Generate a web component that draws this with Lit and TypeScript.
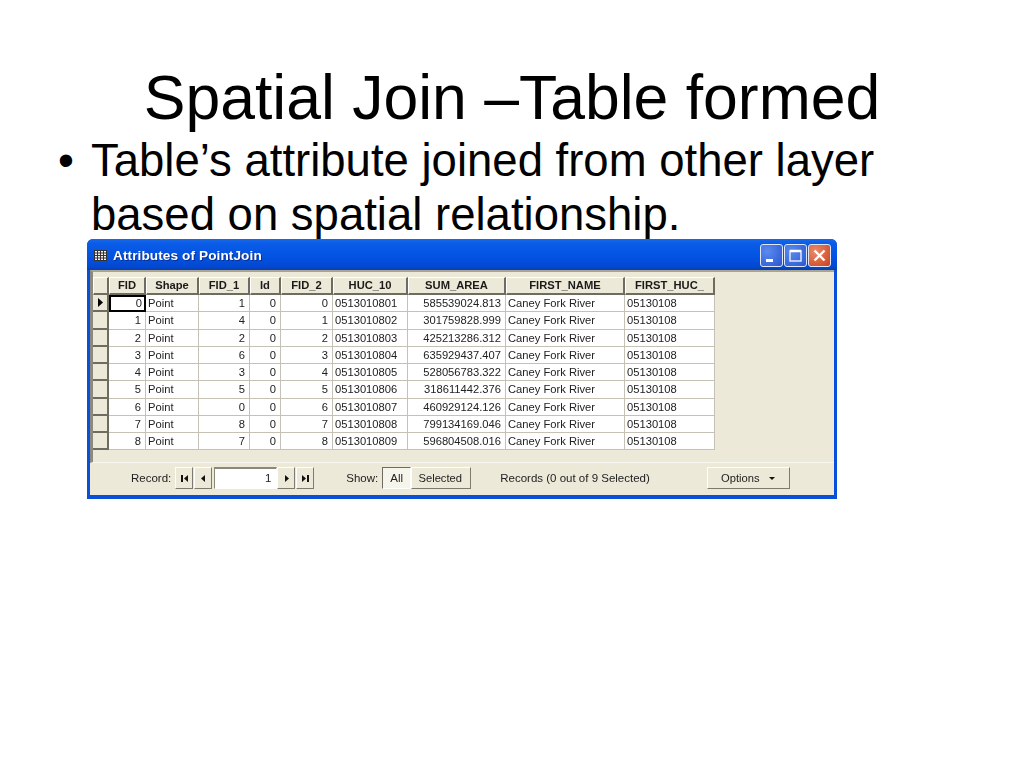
import { LitElement, html, css, svg } from "lit";
import { customElement } from "lit/decorators.js";

const COLS = [37, 53, 51, 31, 52, 75, 98, 119, 90];
const HEADS = ["FID", "Shape", "FID_1", "Id", "FID_2", "HUC_10", "SUM_AREA", "FIRST_NAME", "FIRST_HUC_"];
const ROWS: [number, number, number, number, string][] = [
  [0, 1, 0, 0, "585539024.813"],
  [1, 4, 0, 1, "301759828.999"],
  [2, 2, 0, 2, "425213286.312"],
  [3, 6, 0, 3, "635929437.407"],
  [4, 3, 0, 4, "528056783.322"],
  [5, 5, 0, 5, "318611442.376"],
  [6, 0, 0, 6, "460929124.126"],
  [7, 8, 0, 7, "799134169.046"],
  [8, 7, 0, 8, "596804508.016"],
];

const first = svg`<rect x="1" y="1" width="2" height="7"/><path d="M8 1v7L4 4.5z"/>`;
const prev = svg`<path d="M6 1v7L2 4.5z"/>`;
const next = svg`<path d="M3 1v7l4-3.5z"/>`;
const last = svg`<path d="M1 1v7l4-3.5z"/><rect x="6" y="1" width="2" height="7"/>`;

@customElement("app-root")
export class AppRoot extends LitElement {
  static styles = css`
    :host { display: block; width: 1024px; height: 768px; background: #fff; overflow: hidden;
      font-family: "Liberation Sans", Arial, sans-serif; color: #000; }
    .title { margin: 0; padding-top: 60px; height: 74px; font-size: 62.5px; line-height: 74px; font-weight: 400; text-align: center; }
    .bullet { display: flex; margin: 0; padding: 0 0 0 58px; font-size: 45.5px; line-height: 54px; height: 105px; }
    .dot { width: 33px; flex: none; }
    .win { margin-left: 87px; width: 750px; height: 260px; box-sizing: border-box; display: flex; flex-direction: column;
      background: #0a4fd8; border-radius: 6px 6px 0 0; padding: 0 3px 4px; filter: blur(.35px); }
    .bar { height: 31px; flex: none; display: flex; align-items: center; gap: 1px; box-sizing: border-box;
      color: #fff; font-weight: 700; font-size: 13.6px; letter-spacing: .1px;
      background: linear-gradient(#1a68e8 0, #0a5ce6 15%, #0453e4 55%, #0248d0 90%, #0a3fa8 100%);
      margin: 0 -3px; padding: 2px 6px 0 7px; border-radius: 6px 6px 0 0; }
    .bar svg.ico { margin-right: 5px; }
    .bar .name { flex: 1; text-shadow: 1px 1px 0 #0a2f90; }
    .wb { width: 23px; height: 23px; box-sizing: border-box; border: 1px solid #dfe8fb; border-radius: 3px; flex: none; display: block; }
    .wb svg { display: block; }
    .wb.blue { background: radial-gradient(circle at 30% 30%, #5b8aef, #2a56d0); }
    .wb.red { background: radial-gradient(circle at 30% 30%, #ec8a6a, #c9411c); }
    .body { flex: 1; background: #ece9d8; display: flex; flex-direction: column; min-height: 0; }
    .grid-wrap { height: 193px; flex: none; box-sizing: border-box; border-top: 2px solid #a8a596; border-left: 3px solid #8b8a80;
      border-bottom: 1px solid #f8f7ee; padding-top: 5px; display: flex; align-items: flex-start; }
    .side { width: 16px; flex: none; }
    .corner, .th { height: 18px; box-sizing: border-box; background: #ece9d8; border-right: 2px solid #6e6c60; border-bottom: 2px solid #6e6c60;
      border-top: 1px solid #fff; border-left: 1px solid #fff; }
    .sel { height: 17.25px; box-sizing: border-box; background: #ece9d8; border-right: 2px solid #6e6c60; border-bottom: 2px solid #6e6c60;
      display: flex; align-items: center; justify-content: center; }
    .sel svg { width: 6px; height: 9px; display: block; }
    .table { display: grid; font-size: 11.2px; background: #fff; }
    .th { font-size: 11.2px; font-weight: 700; text-align: center; line-height: 15px; color: #1a1a1a; }
    .td { height: 17.25px; line-height: 17px; box-sizing: border-box; padding: 0 4px 0 2px; background: #fff; color: #222;
      border-right: 1px solid #c5c2b5; border-bottom: 1px solid #c5c2b5; white-space: nowrap; overflow: hidden; position: relative; }
    .num { text-align: right; }
    .cur { border: 2px solid #000; line-height: 13px; padding-right: 2px; padding-left: 0; }
    .status { flex: 1; display: flex; align-items: center; font-size: 11.5px; color: #222; padding: 0 0 2px 41px; }
    .status .lbl { margin-right: 4px; }
    .btn { height: 22px; box-sizing: border-box; background: #ece9d8; border: 1px solid; border-color: #fff #7d7b6e #7d7b6e #fff;
      display: flex; align-items: center; justify-content: center; flex: none; }
    .btn svg { width: 9px; height: 9px; fill: #111; display: block; }
    .nav { width: 18px; margin-right: 1px; }
    .nav + .inp { margin-left: 1px; }
    .inp { width: 63px; height: 22px; box-sizing: border-box; background: #fff; border: 1px solid; border-color: #8a887a #fff #fff #8a887a;
      border-top-width: 2px; text-align: right; padding-right: 5px; line-height: 18px; flex: none; }
    .show { margin-left: 31px; margin-right: 4px; }
    .all { width: 29px; background: #f6f5ec; border-color: #6e6c60 #fff #fff #6e6c60; }
    .selected { width: 60px; font-size: 11.2px; padding-right: 2px; }
    .records { margin-left: 29px; width: 207px; flex: none; }
    .options { width: 83px; gap: 9px; padding-right: 2px; font-size: 11.2px; }
    .tri { width: 0; height: 0; border: 3px solid transparent; border-top: 3px solid #111; border-bottom: 0; }
  `;

  render() {
    const tpl = "grid-template-columns:" + COLS.map((c) => c + "px").join(" ");
    return html`
      <h1 class="title">Spatial Join –Table formed</h1>
      <p class="bullet"><span class="dot">•</span><span>Table’s attribute joined from other layer<br />based on spatial relationship.</span></p>
      <section class="win">
        <div class="bar">
          <svg class="ico" width="13" height="11" viewBox="0 0 13 11"><rect x=".5" y=".5" width="12" height="10" fill="#f2f2f2" stroke="#333"/><path d="M.5 3h12M.5 5.500h12M.5 8h12M3.500 .5v10M6.500 .5v10M9.500 .5v10" stroke="#333" fill="none"/></svg>
          <span class="name">Attributes of PointJoin</span>
          <span class="wb blue"><svg width="21" height="21" viewBox="0 0 21 21"><rect x="5" y="14" width="7" height="3" fill="#fff"/></svg></span>
          <span class="wb blue"><svg width="21" height="21" viewBox="0 0 21 21"><path d="M5 6h11v10H5z" fill="none" stroke="#dfe8fb" stroke-width="1.500"/><path d="M5 6h11" stroke="#fff" stroke-width="2.500"/></svg></span>
          <span class="wb red"><svg width="21" height="21" viewBox="0 0 21 21"><path d="M5.500 5.500l10 10M15.500 5.500l-10 10" stroke="#fff" stroke-width="2.400" fill="none"/></svg></span>
        </div>
        <div class="body">
          <div class="grid-wrap">
            <div class="side">
              <div class="corner"></div>
              ${ROWS.map((_, i) => html`<div class="sel">${i === 0 ? html`<svg viewBox="0 0 6 9"><path d="M1 0v9l5-4.500z"/></svg>` : ""}</div>`)}
            </div>
            <div class="table" style=${tpl}>
              ${HEADS.map((h) => html`<div class="th">${h}</div>`)}
              ${ROWS.map((r, i) => html`
                <div class="td num ${i === 0 ? "cur" : ""}">${r[0]}</div>
                <div class="td">Point</div>
                <div class="td num">${r[1]}</div>
                <div class="td num">${r[2]}</div>
                <div class="td num">${r[3]}</div>
                <div class="td">051301080${i + 1}</div>
                <div class="td num">${r[4]}</div>
                <div class="td">Caney Fork River</div>
                <div class="td">05130108</div>
              `)}
            </div>
          </div>
          <div class="status">
            <span class="lbl">Record:</span>
            <span class="btn nav"><svg viewBox="0 0 9 9">${first}</svg></span>
            <span class="btn nav"><svg viewBox="0 0 9 9">${prev}</svg></span>
            <span class="inp">1</span>
            <span class="btn nav"><svg viewBox="0 0 9 9">${next}</svg></span>
            <span class="btn nav"><svg viewBox="0 0 9 9">${last}</svg></span>
            <span class="show">Show:</span>
            <span class="btn all">All</span>
            <span class="btn selected">Selected</span>
            <span class="records">Records (0 out of 9 Selected)</span>
            <span class="btn options">Options <span class="tri"></span></span>
          </div>
        </div>
      </section>
    `;
  }
}
